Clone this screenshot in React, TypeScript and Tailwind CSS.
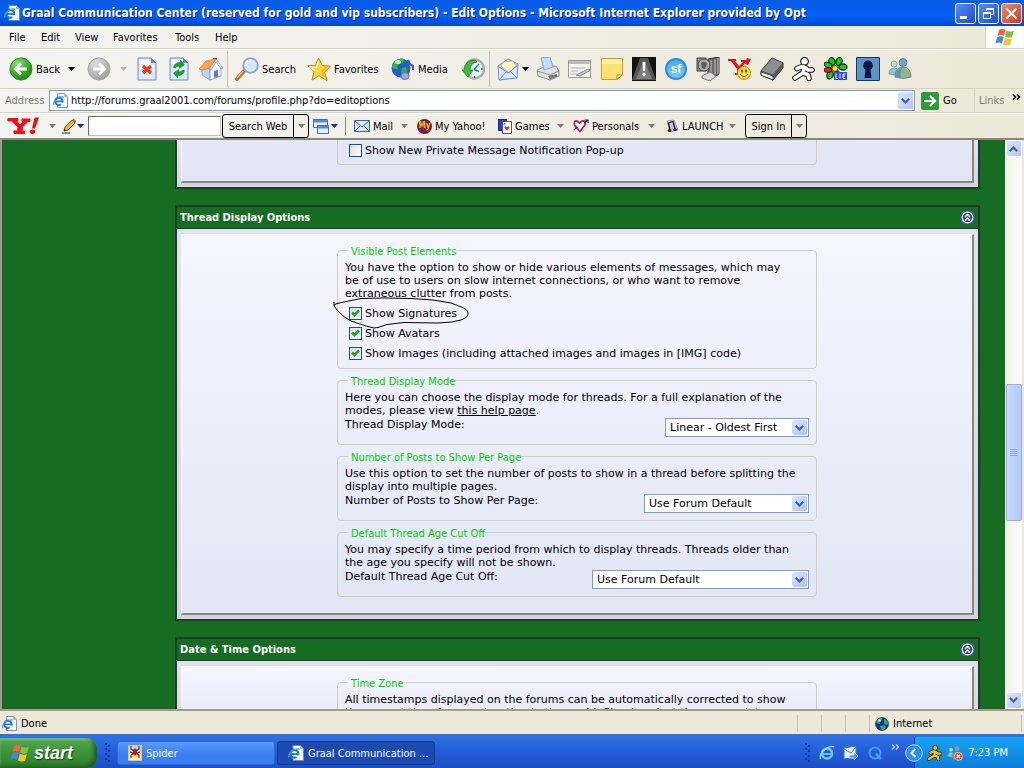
import { useState, type ReactNode } from 'react';
import clsx from 'clsx';

const UI_FONT = "font-['DejaVu_Sans_Condensed','Noto_Sans',sans-serif]";
const TEXT_FONT = "font-['DejaVu_Sans',sans-serif]";

function Arrow({ className = 'fill-black' }: { className?: string }) {
  return (
    <svg width="7" height="4" viewBox="0 0 7 4" className={className}>
      <path d="M0 0h7L3.500 4z" />
    </svg>
  );
}

function Chevron({ up = false }: { up?: boolean }) {
  return (
    <svg width="9" height="6" viewBox="0 0 9 6" fill="none" stroke="#4d6185" strokeWidth="2.2">
      <path d={up ? 'M.8 5.200 4.500 1.500 8.200 5.200' : 'M.8 .8 4.500 4.500 8.200 .8'} />
    </svg>
  );
}

function IePage({ size = 16 }: { size?: number }) {
  return (
    <svg width={size} height={size} viewBox="0 0 16 16">
      <path d="M5 .5h7.500l3 3v12H5z" fill="#f4f8ff" stroke="#7288b0" />
      <path d="M12 1v3h3.500z" fill="#8fa6d4" />
      <circle cx="6.300" cy="8.800" r="3.900" fill="#fff" stroke="#1f76d2" strokeWidth="2.200" />
      <path d="M2.500 9h7.500" stroke="#1f76d2" strokeWidth="1.800" />
      <path d="M7.500 10.200h4v2.300h-3z" fill="#f4f8ff" />
      <path d="M1 12.500C-.5 9 6 3 11.500 4.200" fill="none" stroke="#3c9bea" strokeWidth="1.300" />
    </svg>
  );
}

function Flag({ size = 20 }: { size?: number }) {
  return (
    <svg width={size} height={size} viewBox="0 0 20 18">
      <path d="M4 2q3.500-2 6.500 0L9 8Q6 6 2.500 8z" fill="#f2643a" />
      <path d="M11.500 2.500q3.500 2 7.500.200L17 9q-3.500 1.500-7-.500z" fill="#7fc242" />
      <path d="M2.200 9.200q3.500-2 6.500 0L7 15.500q-3-2-6.500 0z" fill="#3f86e8" />
      <path d="M9.800 9.800q3.500 2 7 .500l-1.800 6.400q-3.500 1.700-7-.300z" fill="#fcc32c" />
    </svg>
  );
}

function Globe({ size = 14 }: { size?: number }) {
  return (
    <svg width={size} height={size} viewBox="0 0 14 14">
      <circle cx="7" cy="7" r="6.500" fill="#1a2cc0" stroke="#111a50" strokeWidth=".6" />
      <path d="M2 3q3-3 5-2 1 2-1 3T5 7Q2 7 1 5zM9 2q4 1 4 5l-2 1-2-2zM5 9l4-1 2 2-3 3.300-2-.8z" fill="#35b32f" />
      <circle cx="4.500" cy="3.500" r="1.300" fill="#c6f3c0" />
    </svg>
  );
}

function RoundArrow({ forward = false }: { forward?: boolean }) {
  return (
    <svg width="24" height="24" viewBox="0 0 24 24">
      <defs>
        <radialGradient id={forward ? 'fwd' : 'bck'} cx=".35" cy=".25" r=".85">
          <stop offset="0" stopColor={forward ? '#dedede' : '#8fe27c'} />
          <stop offset=".6" stopColor={forward ? '#b4b4b4' : '#35a826'} />
          <stop offset="1" stopColor={forward ? '#999' : '#1d7c14'} />
        </radialGradient>
      </defs>
      <circle cx="12" cy="12" r="11" fill={`url(#${forward ? 'fwd' : 'bck'})`} stroke={forward ? '#a5a5a5' : '#2a8a20'} />
      <path
        d={forward ? 'M6 12h11M12 6.500l5.500 5.500-5.500 5.500' : 'M18 12H7M12 6.500 6.500 12l5.500 5.500'}
        fill="none"
        stroke="#fff"
        strokeWidth="2.800"
      />
    </svg>
  );
}

function Page({ children }: { children: ReactNode }) {
  return (
    <svg width="20" height="24" viewBox="0 0 20 24">
      <path d="M1 1h13l5 5v17H1z" fill="#dbe9ff" stroke="#6a8cc4" />
      <path d="M3 3h10v5h4v8L3 12z" fill="#f4f8ff" />
      <path d="M14 1v5h5z" fill="#5f86cc" />
      {children}
    </svg>
  );
}

const StopIcon = () => (
  <Page>
    <path d="m6 9 8 7M14 9l-8 7" stroke="#ee3a10" strokeWidth="3.400" />
  </Page>
);

const RefreshIcon = () => (
  <Page>
    <path d="M4.500 10.500q1-5 6.500-5l.5-2.500 4 5-5.500 3.500.5-2.500q-3 0-4 2z" fill="#16a03a" stroke="#0d8a2c" strokeWidth=".6" />
    <path d="M15.500 13.500q-1 5-6.500 5l-.5 2.500-4-5 5.500-3.500-.5 2.500q3 0 4-2z" fill="#16a03a" stroke="#0d8a2c" strokeWidth=".6" />
  </Page>
);

const HomeIcon = () => (
  <svg width="24" height="24" viewBox="0 0 24 24">
    <path d="M14 1h4v6h-4z" fill="#a33a25" />
    <path d="M3 11v7l8 5V12z" fill="#bcd2f8" stroke="#7d93bd" strokeWidth=".8" />
    <path d="m11 23 11-4v-9l-5-6-6 8z" fill="#f3f8ff" stroke="#7d93bd" strokeWidth=".8" />
    <path d="M0 12 7 4l10-2-6 9-7 2z" fill="#f9a552" stroke="#d87428" strokeWidth=".7" />
    <path d="m17 2 7 9-2 1-5-7-5 8-1-2z" fill="#fff" stroke="#7d93bd" strokeWidth=".7" />
    <path d="M15 21v-7l4-1v7z" fill="#5d7fbc" />
  </svg>
);

const SearchIcon = () => (
  <svg width="24" height="24" viewBox="0 0 24 24">
    <path d="m9 14-7 8" stroke="#c56f2d" strokeWidth="4" strokeLinecap="round" />
    <path d="m8 14-6 7" stroke="#f7b678" strokeWidth="1.400" />
    <circle cx="15.500" cy="8.500" r="7.300" fill="#cfeafc" stroke="#8aa6d8" strokeWidth="1.800" />
    <path d="M10.500 9q0-5 6-5.500" fill="none" stroke="#fff" strokeWidth="2" />
  </svg>
);

const StarIcon = () => (
  <svg width="24" height="24" viewBox="0 0 24 24">
    <path d="m11.500 1 3.800 7.500 8.200.7-6 5.800 2.500 8.500-8-4.800L5 23l2-8.500L.8 8.700l7.700-.2z" fill="#fbd53c" stroke="#b98a14" />
    <path d="m11.500 4-2 6-6 .5 5 3.500" fill="none" stroke="#fff6b8" strokeWidth="1.500" />
    <path d="m20 10-5 4 2 6" fill="none" stroke="#eeb01c" strokeWidth="1.500" />
  </svg>
);

const MediaIcon = () => (
  <svg width="24" height="24" viewBox="0 0 24 24">
    <circle cx="10" cy="11" r="9.500" fill="#1e5fd0" />
    <path d="M3 5q5-5 10-3 0 4-4 5t-2 5q-5 1-6-3zM11 11l4-1 1 4-4 5-2-4z" fill="#35b53c" />
    <ellipse cx="7" cy="5" rx="3" ry="2" fill="#baf0b5" />
    <path d="M17 19V3q1 4 5 6v4" fill="none" stroke="#4a55b5" strokeWidth="2" />
    <ellipse cx="14" cy="19" rx="4" ry="3.500" fill="#9aa5ea" stroke="#6670c8" />
  </svg>
);

const HistoryIcon = () => (
  <svg width="24" height="24" viewBox="0 0 24 24">
    <circle cx="13.500" cy="12" r="9.500" fill="#e8f6ff" stroke="#a9aeb3" strokeWidth="2.400" />
    <path d="M13 12.500 18 7M13 12.500l5 2" stroke="#3b76b3" strokeWidth="1.400" />
    <path d="M3 13Q4 3 14 3l2 2q-7 1-7 8h3l-5 7-6-7z" fill="#43b93b" stroke="#1d7f1c" strokeWidth=".8" />
    <path d="M13.500 19v2M20 12h2" stroke="#5a6f88" strokeWidth="1.500" />
  </svg>
);

const MailIcon = () => (
  <svg width="22" height="24" viewBox="0 0 22 24">
    <path d="m1 9 10-7 10 5-1 14-18 2z" fill="#b9d4fb" stroke="#6d8fce" />
    <path d="m4 9 2-4 10-1 3 5-7 7z" fill="#fff3c4" stroke="#d9a84a" strokeWidth=".8" />
    <path d="m2 11 9 6 9-8v11l-18 2z" fill="#d8e8ff" />
    <path d="m1 9 10 7 10-8M2 23l7-8M20 21l-7-7" fill="none" stroke="#6d8fce" />
  </svg>
);

const PrinterIcon = () => (
  <svg width="24" height="24" viewBox="0 0 24 24">
    <path d="m1 13 7-3 12-1 3 5v5l-9 4-12-4z" fill="#e2e2e0" stroke="#8c8c8c" />
    <path d="M5 1 14 0l3 10-9 3z" fill="#c4dcff" stroke="#6f93cf" strokeWidth=".8" />
    <path d="m1 14 13 4 9-4M14 18v5" fill="none" stroke="#8c8c8c" />
    <path d="m12 19 9-2v3l-7 2z" fill="#777" />
  </svg>
);

const EditIcon = () => (
  <svg width="24" height="20" viewBox="0 0 24 20">
    <path d="M.5 1.500h22v17H.5z" fill="#f2f2f0" stroke="#9a9a9a" />
    <path d="M1 2h21v3H1z" fill="#bcbcba" />
    <path d="M3 9h14M3 12h7M3 15h5" stroke="#b0b0b0" />
    <path d="m8 16 12-6 3 1-11 6z" fill="#c9c9c9" stroke="#777" strokeWidth=".8" />
  </svg>
);

const NoteIcon = () => (
  <svg width="22" height="22" viewBox="0 0 22 22">
    <path d="M.5.500h21v16l-5 5H.5z" fill="#fde173" stroke="#d89a1b" />
    <path d="M1 1h20v5H1z" fill="#fdf0a8" />
    <path d="M21 17h-5v4z" fill="#fff8d0" stroke="#c98512" />
  </svg>
);

const AlertIcon = () => (
  <svg width="24" height="24" viewBox="0 0 24 24">
    <path d="M0 0h24v24H0z" fill="#111" />
    <path d="M8 1h8l8 22H0z" fill="#555" />
    <path d="m12 3 8 19H4z" fill="#999" opacity=".6" />
    <path d="M10.500 5h3l-.5 9h-2z" fill="#fff" />
    <circle cx="12" cy="17.500" r="1.800" fill="#fff" />
  </svg>
);

const SfIcon = () => (
  <span className="flex size-[22px] items-center justify-center rounded-full border-2 border-[#2a8fd8] bg-linear-to-b from-[#48aeee] to-[#7cc8f6] font-['Liberation_Sans',sans-serif] text-xs font-bold text-white">
    sf
  </span>
);

const TowerIcon = () => (
  <svg width="24" height="24" viewBox="0 0 24 24">
    <path d="M1 1h9v13H1z" fill="#8d8d8d" stroke="#444" />
    <path d="M12 2l11-2v17l-8 5-3-4z" fill="#6b6b6b" stroke="#333" />
    <path d="M15 3v14M19 2v15M22 1v16" stroke="#bbb" />
    <circle cx="8" cy="8" r="6" fill="#a8a8a8" stroke="#555" />
    <path d="M5 6q4-3 6 1l-2 5-3-1z" fill="#5c5c5c" />
    <path d="m6 19 8-4 6 4-6 5-8-3z" fill="#ddd" stroke="#777" />
  </svg>
);

const YMessengerIcon = () => (
  <svg width="24" height="24" viewBox="0 0 24 24">
    <path d="M0 2h8v2H7l4 5 4-4h-2V3h5v2l-6 7v4h2v2H7v-2h2v-4L3 4H0z" fill="#d8141c" />
    <path d="m19 1 4 1-3 6-3-1z" fill="#d8141c" />
    <circle cx="16" cy="16" r="6.500" fill="#ffdb2c" stroke="#b88908" />
    <path d="M14 12.500v3M18 12.500v3" stroke="#222" strokeWidth="1.300" />
    <path d="M12 17q4 5 8 0" fill="#fff" stroke="#b2402b" />
  </svg>
);

const BookIcon = () => (
  <svg width="24" height="24" viewBox="0 0 24 24">
    <path d="M1 14 12 1l11 5v5L13 23 1 18z" fill="#777" stroke="#222" />
    <path d="m1 15 12 4v4L1 18z" fill="#fff" stroke="#444" />
    <path d="M13 19 23 7v4L13 23z" fill="#555" />
    <path d="M1 14 12 1l11 5-10 12z" fill="#8e8e8e" stroke="#444" strokeWidth=".7" />
  </svg>
);

function RunnerIcon({ size = 24, fill = '#fff' }: { size?: number; fill?: string }) {
  const body = 'M5 11.500 10 9.500l4 1.500 2 2h4M12 11l-1 5-3.500 2-4.500 3M11 16l5 1.500 1 4';
  return (
    <svg width={size} height={size} viewBox="0 0 24 24" fill="none" strokeLinecap="round" strokeLinejoin="round">
      <path d={body} stroke="#111" strokeWidth="5.600" />
      <circle cx="12.500" cy="4.300" r="3.800" fill={fill} stroke="#111" strokeWidth="1.200" />
      <path d={body} stroke={fill} strokeWidth="3.600" />
    </svg>
  );
}

const FlowerIcon = () => (
  <svg width="24" height="24" viewBox="0 0 24 24">
    <g fill="#1fc52c" stroke="#053b08" strokeWidth="1.300">
      <ellipse cx="8" cy="4.500" rx="3" ry="4" transform="rotate(-20 8 4.500)" />
      <ellipse cx="15" cy="4.500" rx="3" ry="4" transform="rotate(20 15 4.500)" />
      <ellipse cx="19" cy="10" rx="4" ry="3" />
      <ellipse cx="6" cy="18" rx="3" ry="4" transform="rotate(25 6 18)" />
      <ellipse cx="13" cy="18" rx="3" ry="4" />
      <ellipse cx="4" cy="8" rx="4" ry="2.500" transform="rotate(20 4 8)" />
    </g>
    <ellipse cx="4" cy="13" rx="4" ry="2.500" fill="#e02020" stroke="#500" />
    <circle cx="11" cy="11.500" r="3" fill="#ffe52c" stroke="#443c00" />
    <path d="M10 15h13v8H10z" fill="#2b45f0" />
    <path d="M12 16.500v5h2M16 16.500v5M21.500 17H19v4.500h2.500M19 19h2" fill="none" stroke="#fff" />
  </svg>
);

const KeyholeIcon = () => (
  <svg width="24" height="24" viewBox="0 0 24 24">
    <path d="M.5.500h23v23H.5z" fill="#6094c8" stroke="#123a70" />
    <path d="M12 3.500a5 5 0 0 0-2.500 9.200L8.500 21h7l-1-8.300A5 5 0 0 0 12 3.500z" fill="#0c1a45" />
  </svg>
);

function BuddiesIcon({ size = 24, busy = false }: { size?: number; busy?: boolean }) {
  return (
    <svg width={size} height={size} viewBox="0 0 24 24">
      <circle cx="6" cy="7" r="3" fill="#b5dfd0" stroke="#5f9aa0" strokeWidth=".7" />
      <path d="M1 17q0-6 5-6t5 6q-5 2-10 0z" fill="#8fc4c8" stroke="#5f9aa0" strokeWidth=".7" />
      <circle cx="15" cy="5.500" r="4" fill="#6fa3cd" stroke="#43719f" strokeWidth=".7" />
      <path d="M7 20q0-10 8-10t8 10q-8 3-16 0z" fill="#8fb884" stroke="#43719f" strokeWidth=".7" />
      <path d="M8 20q0-9 7-9.500-4 4-2 10.500-3 0-5-1z" fill="#5e90bf" />
      {busy && (
        <>
          <circle cx="17" cy="17" r="6" fill="#e03a22" stroke="#fff" />
          <path d="m14.500 14.500 5 5M19.500 14.500l-5 5" stroke="#fff" strokeWidth="2" />
        </>
      )}
    </svg>
  );
}

const EXTRA_TOOLS = [
  { label: 'Print', icon: <PrinterIcon /> },
  { label: 'Edit', icon: <EditIcon /> },
  { label: 'Discuss', icon: <NoteIcon /> },
  { label: 'Alert', icon: <AlertIcon /> },
  { label: 'SourceForge', icon: <SfIcon /> },
  { label: 'Research', icon: <TowerIcon /> },
  { label: 'Yahoo! Messenger', icon: <YMessengerIcon /> },
  { label: 'Dictionary', icon: <BookIcon /> },
  { label: 'AIM', icon: <RunnerIcon /> },
  { label: 'ICQ Lite', icon: <FlowerIcon /> },
  { label: 'Keyhole', icon: <KeyholeIcon /> },
  { label: 'Messenger', icon: <BuddiesIcon /> },
];

const MENU = [
  { label: 'File', width: 'w-8' },
  { label: 'Edit', width: 'w-[34px]' },
  { label: 'View', width: 'w-[38px]' },
  { label: 'Favorites', width: 'w-[62px]' },
  { label: 'Tools', width: 'w-10' },
  { label: 'Help', width: 'w-9' },
];

function TitleBar() {
  return (
    <header className="flex h-[26px] shrink-0 items-center bg-linear-to-b from-[#0a5be6] via-[#0461f5] via-60% to-[#0347cf] pr-0.5 pl-1">
      <IePage />
      <h1 className="ml-0.5 min-w-0 flex-1 overflow-hidden text-xs font-bold whitespace-nowrap text-white [text-shadow:1px_1px_#0a1883]">
        Graal Communication Center (reserved for gold and vip subscribers) - Edit Options - Microsoft Internet Explorer provided by Opt
      </h1>
      <div className="flex gap-0.5">
        <button aria-label="Minimize" className="flex size-[21px] items-end rounded-[3px] border border-white bg-linear-to-br from-[#5c8cf0] to-[#1c4ad0] pb-1 pl-1">
          <span className="h-[3px] w-[7px] bg-white" />
        </button>
        <button aria-label="Restore" className="flex size-[21px] items-center justify-center rounded-[3px] border border-white bg-linear-to-br from-[#5c8cf0] to-[#1c4ad0]">
          <svg width="11" height="11" viewBox="0 0 11 11" fill="none" stroke="#fff">
            <path d="M3.500 3V.5h7v6H8M3.500 1.500h7M.5 4.500h7v6h-7zM.5 5.500h7" />
          </svg>
        </button>
        <button aria-label="Close" className="flex size-[21px] items-center justify-center rounded-[3px] border border-white bg-linear-to-br from-[#ee8c6c] to-[#cc3410]">
          <svg width="13" height="13" viewBox="0 0 13 13" stroke="#fff" strokeWidth="2.200">
            <path d="m1.500 1.500 10 10M11.500 1.500l-10 10" />
          </svg>
        </button>
      </div>
    </header>
  );
}

function MenuBar() {
  return (
    <nav className="flex h-[23px] shrink-0 border-b border-[#d8d2bd]">
      <div className="flex flex-1 pl-[9px]">
        {MENU.map((item) => (
          <button key={item.label} className={clsx('text-left', item.width)}>
            {item.label}
          </button>
        ))}
      </div>
      <div className="flex w-[39px] items-center justify-center border-l border-[#d8d2bd] bg-white">
        <Flag />
      </div>
    </nav>
  );
}

const Separator = () => <span className="h-9 w-px bg-[#c5c2b2]" />;

function ToolBar() {
  return (
    <div className="flex h-10 shrink-0 items-center border-t border-b border-t-white border-b-[#d8d2bd] pl-[9px]">
      <button className="flex w-[54px] items-center gap-[3px]">
        <RoundArrow />
        Back
      </button>
      <button aria-label="Back history" className="flex w-4 justify-center">
        <Arrow />
      </button>
      <button aria-label="Forward" className="ml-1 flex w-8 justify-center">
        <RoundArrow forward />
      </button>
      <button aria-label="Forward history" className="flex w-4 justify-center">
        <Arrow className="fill-[#b9b6a9]" />
      </button>
      <button aria-label="Stop" className="flex w-8 justify-center">
        <StopIcon />
      </button>
      <button aria-label="Refresh" className="flex w-8 justify-center">
        <RefreshIcon />
      </button>
      <button aria-label="Home" className="flex w-8 justify-center">
        <HomeIcon />
      </button>
      <Separator />
      <button className="ml-[7px] flex w-[72px] items-center gap-[3px]">
        <SearchIcon />
        Search
      </button>
      <button className="flex w-[84px] items-center gap-[3px]">
        <StarIcon />
        Favorites
      </button>
      <button className="flex w-[66px] items-center gap-[3px]">
        <MediaIcon />
        Media
      </button>
      <button aria-label="History" className="flex w-8 justify-center">
        <HistoryIcon />
      </button>
      <Separator />
      <button aria-label="Mail" className="ml-[7px] flex w-[35px] items-center gap-[3px]">
        <MailIcon />
        <Arrow />
      </button>
      {EXTRA_TOOLS.map((tool) => (
        <button key={tool.label} aria-label={tool.label} className="flex w-8 justify-center">
          {tool.icon}
        </button>
      ))}
    </div>
  );
}

function AddressBar() {
  return (
    <div className="flex h-6 shrink-0 items-center border-b border-[#d8d2bd] pl-[5px]">
      <label htmlFor="address" className="w-11 text-[#7c7a70]">
        Address
      </label>
      <div className="flex h-[21px] flex-1 items-center border border-[#7f9db9] bg-white pr-px pl-[3px]">
        <IePage size={15} />
        <input id="address" defaultValue="http://forums.graal2001.com/forums/profile.php?do=editoptions" className="ml-[3px] min-w-0 flex-1 outline-none" />
        <button aria-label="Show addresses" className="flex h-[17px] w-[15px] items-center justify-center rounded-xs bg-linear-to-br from-[#dbe6ff] to-[#b0c6f8]">
          <Chevron />
        </button>
      </div>
      <button className="ml-1.5 flex w-[53px] items-center gap-1">
        <svg width="18" height="18" viewBox="0 0 18 18">
          <rect width="18" height="18" rx="2" fill="#2f9a3a" />
          <path d="M3 9h11M9 4l5 5-5 5" fill="none" stroke="#fff" strokeWidth="2.200" />
        </svg>
        Go
      </button>
      <button className="flex h-full w-[50px] items-center gap-2 border-l border-[#d8d2bd] pl-1 text-[#7c7a70]">
        Links
        <svg width="9" height="6" viewBox="0 0 9 6" fill="none" stroke="#000" strokeWidth="1.500" className="mb-2">
          <path d="m1 .5 2.500 2.500L1 5.500M5 .5 7.500 3 5 5.500" />
        </svg>
      </button>
    </div>
  );
}

const MyYahooIcon = () => (
  <span className="flex size-[15px] items-center justify-center rounded-full bg-radial from-[#a02a58] to-[#5a0c34] text-[8px] leading-none font-bold text-[#e8c020]">
    My
  </span>
);

const YAHOO_LINKS = [
  {
    label: 'Mail',
    width: 'w-[45px]',
    menu: true,
    icon: (
      <svg width="16" height="12" viewBox="0 0 16 12">
        <path d="M.5.500h15v11H.5z" fill="#d9ebff" stroke="#3c63b0" />
        <path d="m1 1 7 6 7-6M1 11l5-5M15 11l-5-5" fill="none" stroke="#3c63b0" />
      </svg>
    ),
  },
  { label: 'My Yahoo!', width: 'w-[81px]', menu: false, icon: <MyYahooIcon /> },
  {
    label: 'Games',
    width: 'w-[57px]',
    menu: true,
    icon: (
      <svg width="14" height="15" viewBox="0 0 14 15">
        <path d="M.5.500h8v11h-8z" fill="#2543c8" stroke="#13247c" />
        <path d="M4.500 2.500h9v12h-9z" fill="#fff" stroke="#555" />
        <path d="M9 11.500 6.500 8.700q0-2 2.500-.5 2.500-1.500 2.500.5z" fill="#e0202a" />
        <path d="M6 4h1.500v1.500H6z" fill="#e0202a" />
      </svg>
    ),
  },
  {
    label: 'Personals',
    width: 'w-[73px]',
    menu: true,
    icon: (
      <svg width="16" height="14" viewBox="0 0 16 14">
        <path d="M7 12.500 1.500 6Q.5 1.500 4 2l2.500 2L9 2q4-.5 3 4z" fill="#fff" stroke="#b8184c" strokeWidth="1.700" />
        <path d="m1 11 3-3M11 4l4-3M11.500 1H15v3" fill="none" stroke="#2a1c80" strokeWidth="1.200" />
      </svg>
    ),
  },
  {
    label: 'LAUNCH',
    width: 'w-[63px]',
    menu: true,
    icon: (
      <svg width="15" height="14" viewBox="0 0 15 14">
        <path d="M0 5h3M0 9h3M1 12h3" stroke="#f0e060" strokeWidth="1.500" />
        <path d="m3 2 7-1 4 10-8 2z" fill="#cbbfe4" stroke="#8f80b0" strokeWidth=".8" />
        <path d="M6 11 4.500 4 9 2.500 11 10" fill="none" stroke="#222" strokeWidth="1.300" />
        <ellipse cx="5.500" cy="11.500" rx="1.800" ry="1.500" fill="#222" />
        <ellipse cx="11" cy="10.500" rx="1.800" ry="1.500" fill="#222" />
      </svg>
    ),
  },
];

function YahooBar() {
  return (
    <div className="flex h-[25px] shrink-0 items-center border-t border-white pl-[7px]">
      <button aria-label="Yahoo!" className="flex w-9">
        <svg width="33" height="18" viewBox="0 0 33 18" fill="#f01018">
          <path d="M1 1.500h10V4H9.500l3.500 4 3.500-3.500H15V2h8v2.500h-2L15.500 10l-.5 4h2.500v2.500H7V14h3.500l.5-4L4.500 4H1z" stroke="#f01018" />
          <path d="M27.500.500H32l-4 11h-3z" />
          <ellipse cx="25.500" cy="14.800" rx="2.700" ry="2.200" />
        </svg>
      </button>
      <button aria-label="Yahoo! menu" className="flex w-[19px] justify-center">
        <Arrow className="fill-[#7c7a70]" />
      </button>
      <button aria-label="Highlight" className="flex w-[26px] items-center">
        <svg width="15" height="16" viewBox="0 0 15 16">
          <path d="M0 15h8" stroke="#222" />
          <path d="m2 13 1-4 7-7 3 3-7 7z" fill="#f7b32b" stroke="#7a4a06" />
          <path d="m10 2 1.500-1.500 3 3L13 5z" fill="#cc5a55" />
          <path d="m2 13 .5-2L4 12.500z" />
        </svg>
        <Arrow className="fill-[#142a9c]" />
      </button>
      <input aria-label="Search the web" className="h-5 w-[133px] border border-[#c9c5b5] border-t-[#716f64] border-l-[#716f64] bg-white px-1 outline-none" />
      <div className="ml-px flex h-6 w-[87px] rounded-[3px] border border-black">
        <button className="flex-1 border-r border-black text-center whitespace-nowrap">Search Web</button>
        <button aria-label="Search options" className="flex w-3.5 items-center justify-center">
          <Arrow className="fill-[#7c7a70]" />
        </button>
      </div>
      <button aria-label="Pop-up blocker" className="ml-1 flex w-8 items-center gap-0.5">
        <svg width="16" height="15" viewBox="0 0 16 15">
          <path d="M.5.500h14v8H.5zM4.500 6.500h11v8h-11z" fill="#e8f1ff" stroke="#4a6cb8" />
          <path d="M1 1h13v2.500H1zM5 7h10v2.500H5z" fill="#5c86dc" />
        </svg>
        <Arrow className="fill-[#142a9c]" />
      </button>
      <span className="mr-2 h-[18px] w-px bg-[#8b897c]" />
      {YAHOO_LINKS.map((link) => (
        <div key={link.label} className="flex items-center">
          <button className={clsx('flex items-center gap-[3px] text-left whitespace-nowrap', link.width)}>
            {link.icon}
            {link.label}
          </button>
          {link.menu && (
            <button aria-label={`${link.label} menu`} className="flex w-[18px] pl-0.5">
              <Arrow className="fill-[#7c7a70]" />
            </button>
          )}
        </div>
      ))}
      <div className="flex h-6 w-[62px] rounded-[3px] border border-black">
        <button className="flex-1 border-r border-black text-center whitespace-nowrap">Sign In</button>
        <button aria-label="Sign in options" className="flex w-3.5 items-center justify-center">
          <Arrow className="fill-[#7c7a70]" />
        </button>
      </div>
    </div>
  );
}

function CheckRow({ label, checked = false }: { label: string; checked?: boolean }) {
  const [on, setOn] = useState(checked);
  return (
    <label className="flex h-5 items-center gap-[3px] pl-1">
      <span className="relative flex">
        <input
          type="checkbox"
          checked={on}
          onChange={(e) => setOn(e.target.checked)}
          className="size-[13px] appearance-none border border-[#1c5180] bg-linear-to-br from-[#dcdcd7] to-white"
        />
        {on && (
          <svg width="9" height="9" viewBox="0 0 9 9" className="pointer-events-none absolute top-0.5 left-0.5">
            <path d="M1 3.500 3.500 6 8 1.500" fill="none" stroke="#21a121" strokeWidth="2.600" />
          </svg>
        )}
      </span>
      {label}
    </label>
  );
}

function OptionGroup({ legend, children }: { legend: string; children: ReactNode }) {
  return (
    <fieldset className="w-[480px] rounded-[4px] border border-[#d0d0bf] px-[7px] pt-[3px] pb-[5px]">
      <legend className={clsx('ml-[3px] pt-0.5 pl-[3px] text-[#00cc00]', UI_FONT)}>{legend}</legend>
      {children}
    </fieldset>
  );
}

function SelectRow({ id, label, value, width }: { id: string; label: string; value: string; width: string }) {
  return (
    <div className="mt-px flex items-start justify-between pb-0.5">
      <label htmlFor={id}>{label}</label>
      <div className={clsx('relative', width)}>
        <select id={id} defaultValue={value} className="block h-[19px] w-full appearance-none border border-[#7f9db9] bg-white pr-5 pl-1 outline-none">
          <option>{value}</option>
        </select>
        <span className="pointer-events-none absolute top-0.5 right-0.5 flex h-[15px] w-[15px] items-center justify-center rounded-xs bg-linear-to-br from-[#dbe6ff] to-[#a9c2fb]">
          <Chevron />
        </span>
      </div>
    </div>
  );
}

function Panel({ title, children }: { title?: string; children: ReactNode }) {
  return (
    <section className={clsx('border-2 border-[#1f3d26] bg-linear-to-b from-[#e1e4f2] to-[#d3d5e2]', !title && 'border-t-0')}>
      {title && (
        <div className="flex h-[22px] items-center justify-between border-b border-[#1f3d26] bg-[#156c22] pr-1 pl-[3px]">
          <h2 className={clsx('font-bold text-white', UI_FONT)}>{title}</h2>
          <button aria-label={`Collapse ${title}`}>
            <svg width="13" height="13" viewBox="0 0 13 13" fill="none">
              <path d="M0 0h13v13H0z" fill="#3f5a96" />
              <circle cx="6.500" cy="6.500" r="5.300" fill="#2c4684" stroke="#fff" strokeWidth="1.200" />
              <path d="m4 6 2.500-2.500L9 6M4 9.500 6.500 7 9 9.500" stroke="#fff" strokeWidth="1.400" />
            </svg>
          </button>
        </div>
      )}
      <div className={clsx('px-1 pb-1', title && 'pt-[5px]')}>
        <div
          className={clsx(
            'flex flex-col items-center gap-1 border-r-2 border-b-2 border-l border-r-[#8a867c] border-b-[#8a867c] border-l-white bg-linear-to-b pb-4',
            title ? 'border-t border-t-white from-[#f5f5ff] to-[#e2e6f4] pt-2' : 'from-[#e4e7f5] to-[#e2e6f4]',
          )}
        >
          {children}
        </div>
      </div>
    </section>
  );
}

// freehand loop drawn round one of the options
const Scribble = () => (
  <svg width="138" height="34" viewBox="0 0 138 34" fill="none" stroke="#000" className="pointer-events-none absolute -top-1 -left-3">
    <path d="M1 6v4l4 5q5 6 13 10l15 5 8 2 4-.500 9-3 17-2 34 .5 14-1 9-2q8-3 7-7 0-4-8-6.500l-9-3.500-18-3-22-1.500-28-.5-22 .500L4 7.500 1 9" />
  </svg>
);

function ForumPage() {
  return (
    <main className={clsx('flex min-w-0 flex-1 flex-col gap-4 overflow-hidden bg-[#156c22] pr-[25px] pl-[173px]', TEXT_FONT)}>
      <Panel>
        <div className="w-[480px] rounded-b-[4px] border border-t-0 border-[#d0d0bf] px-[7px] pb-1">
          <CheckRow label="Show New Private Message Notification Pop-up" />
        </div>
      </Panel>
      <Panel title="Thread Display Options">
        <OptionGroup legend="Visible Post Elements">
          <p>
            You have the option to show or hide various elements of messages, which may
            <br />
            be of use to users on slow internet connections, or who want to remove
            <br />
            extraneous clutter from posts.
          </p>
          <div className="relative pt-[3px]">
            <CheckRow label="Show Signatures" checked />
            <CheckRow label="Show Avatars" checked />
            <CheckRow label="Show Images (including attached images and images in [IMG] code)" checked />
            <Scribble />
          </div>
        </OptionGroup>
        <OptionGroup legend="Thread Display Mode">
          <p>
            Here you can choose the display mode for threads. For a full explanation of the
            <br />
            modes, please view{' '}
            <a href="#help" className="underline">
              this help page
            </a>
            .
          </p>
          <SelectRow id="mode" label="Thread Display Mode:" value="Linear - Oldest First" width="w-36" />
        </OptionGroup>
        <OptionGroup legend="Number of Posts to Show Per Page">
          <p>
            Use this option to set the number of posts to show in a thread before splitting the
            <br />
            display into multiple pages.
          </p>
          <SelectRow id="posts" label="Number of Posts to Show Per Page:" value="Use Forum Default" width="w-[165px]" />
        </OptionGroup>
        <OptionGroup legend="Default Thread Age Cut Off">
          <p>
            You may specify a time period from which to display threads. Threads older than
            <br />
            the age you specify will not be shown.
          </p>
          <SelectRow id="age" label="Default Thread Age Cut Off:" value="Use Forum Default" width="w-[217px]" />
        </OptionGroup>
      </Panel>
      <Panel title="Date & Time Options">
        <OptionGroup legend="Time Zone">
          <p>
            All timestamps displayed on the forums can be automatically corrected to show
            <br />
            the correct time for your location in the world. Simply select the appropriate
          </p>
        </OptionGroup>
      </Panel>
    </main>
  );
}

function ScrollBar() {
  const button = 'flex h-[17px] w-4 shrink-0 items-center justify-center rounded-xs border border-white bg-linear-to-br from-[#dbe6ff] to-[#b0c6f8]';
  return (
    <div className="flex w-[17px] shrink-0 flex-col items-center bg-linear-to-r from-[#f0eee6] to-white">
      <button aria-label="Scroll up" className={button}>
        <Chevron up />
      </button>
      <div className="grow-57 basis-0" />
      <div className="flex w-4 grow-34 basis-0 flex-col items-center justify-center gap-px rounded-xs border border-[#98b0e4] bg-linear-to-r from-[#cbdafe] to-[#b2cafa]">
        {[0, 1, 2, 3].map((i) => (
          <span key={i} className="h-px w-[7px] bg-[#8ca8ea]" />
        ))}
      </div>
      <div className="grow-43 basis-0" />
      <button aria-label="Scroll down" className={button}>
        <Chevron />
      </button>
    </div>
  );
}

function StatusBar() {
  return (
    <div className="flex h-[23px] shrink-0 items-center bg-[#ece9d8] px-0.5 pt-0.5">
      <IePage size={15} />
      <span className="flex-1 pl-1">Done</span>
      {[0, 1, 2].map((i) => (
        <span key={i} className="h-[17px] w-6 border-l border-[#c5c2b2]" />
      ))}
      <span className="flex h-[17px] w-[153px] items-center gap-1 border-x border-[#c5c2b2] pl-[5px]">
        <Globe />
        Internet
      </span>
    </div>
  );
}

const Grip = () => (
  <svg width="6" height="20" viewBox="0 0 6 20" fill="#123a9c">
    <path d="M0 0h2v2H0zM3 2h2v2H3zM0 5h2v2H0zM3 7h2v2H3zM0 10h2v2H0zM3 12h2v2H3zM0 15h2v2H0zM3 17h2v2H3z" />
  </svg>
);

function TaskBar() {
  return (
    <footer className="flex h-[34px] shrink-0 items-stretch bg-linear-to-b from-[#2f6fe0] from-10% via-[#245edb] to-[#1d4fc4] pt-1 text-white">
      <button className="flex w-[97px] items-center gap-1 rounded-r-[10px] bg-linear-to-b from-[#55a853] via-[#3a9438] to-[#2f7f2e] pl-2.5 font-['Liberation_Sans',sans-serif] text-lg font-bold italic shadow-[inset_-3px_-2px_4px_#1d5c1d,inset_0_2px_2px_#7cc57a] [text-shadow:1px_1px_1px_#1a401a]">
        <Flag />
        start
      </button>
      <div className="flex flex-1 items-center gap-0.5 pl-2">
        <span className="mr-1">
          <Grip />
        </span>
        <button className="flex h-6 w-[158px] items-center gap-1 rounded-[3px] border border-[#2b66dc] bg-linear-to-b from-[#5c9bfc] via-[#3c80f4] to-[#3a7cf0] pl-2.5">
          <svg width="14" height="16" viewBox="0 0 14 16">
            <path d="M.5.500h13v15H.5z" fill="#f3e9a8" stroke="#d8c888" />
            <path d="M1 1h12v6H1z" fill="#a8dcec" />
            <ellipse cx="7" cy="7" rx="2" ry="3.500" fill="#c41818" />
            <path d="M3 1v3l3 2M11 1v3L8 6M2 7l3 1M12 7 9 8M3 13v-3l3-2M11 13v-3L8 8" fill="none" stroke="#a01414" strokeWidth="1.200" />
          </svg>
          Spider
        </button>
        <button className="flex h-6 w-[158px] items-center gap-1 rounded-[3px] border border-[#143c8c] bg-[#1c4ab0] pl-2.5 whitespace-nowrap">
          <IePage />
          Graal Communication ...
        </button>
      </div>
      <div className="flex w-[109px] items-center gap-2">
        <Grip />
        <svg width="16" height="16" viewBox="0 0 16 16" fill="none">
          <circle cx="8" cy="8.500" r="5" stroke="#6fc4fa" strokeWidth="2.400" />
          <path d="M4 9h9" stroke="#6fc4fa" strokeWidth="1.800" />
          <path d="M1.500 14Q0 9 6 4.500T15 2" stroke="#a5defc" strokeWidth="1.300" />
        </svg>
        <svg width="16" height="16" viewBox="0 0 16 16">
          <path d="m1 3 12-2v11L1 14z" fill="#e6f1ff" stroke="#3a78cc" />
          <path d="m1 4 7 4 5-6" fill="none" stroke="#3a78cc" />
          <path d="M6 10h5V7l4 4-4 4v-2H6z" fill="#3aa0e8" stroke="#fff" strokeWidth=".7" />
        </svg>
        <svg width="16" height="16" viewBox="0 0 16 16" fill="none" stroke="#4a9cf0">
          <circle cx="8" cy="8" r="5.500" strokeWidth="2" />
          <path d="m9 9 5 5" strokeWidth="2.500" />
        </svg>
        <svg width="9" height="6" viewBox="0 0 9 6" fill="none" stroke="#b8d4ff" strokeWidth="1.300" className="mb-3">
          <path d="m1 .5 2.500 2.500L1 5.500M5 .5 7.500 3 5 5.500" />
        </svg>
      </div>
      <div className="-mt-px flex w-[110px] items-center gap-1 border-l border-[#0a3aa0] bg-linear-to-b from-[#16a6f4] via-[#1290e8] to-[#0f7ed8]">
        <button aria-label="Show hidden icons" className="-ml-2.5">
          <svg width="18" height="18" viewBox="0 0 18 18">
            <circle cx="9" cy="9" r="8.300" fill="#2b8cf0" stroke="#b5dcfc" strokeWidth="1" />
            <path d="M10.500 5 6.500 9l4 4" fill="none" stroke="#fff" strokeWidth="2" />
          </svg>
        </button>
        <RunnerIcon size={16} fill="#f5c32c" />
        <BuddiesIcon size={16} busy />
        <span className="flex-1 pr-4 text-right whitespace-nowrap">7:23 PM</span>
      </div>
    </footer>
  );
}

export default function App() {
  return (
    <div className={clsx('flex h-screen flex-col overflow-hidden bg-linear-to-r from-[#f4f4f2] to-[#ece9d8] text-[11px] leading-[13px] text-black', UI_FONT)}>
      <TitleBar />
      <MenuBar />
      <ToolBar />
      <AddressBar />
      <YahooBar />
      <div className="flex min-h-0 flex-1 border-t-2 border-b-2 border-l-2 border-t-[#8b887a] border-b-[#a09d90] border-l-[#a09d90] pr-0.5">
        <ForumPage />
        <ScrollBar />
      </div>
      <StatusBar />
      <TaskBar />
    </div>
  );
}
